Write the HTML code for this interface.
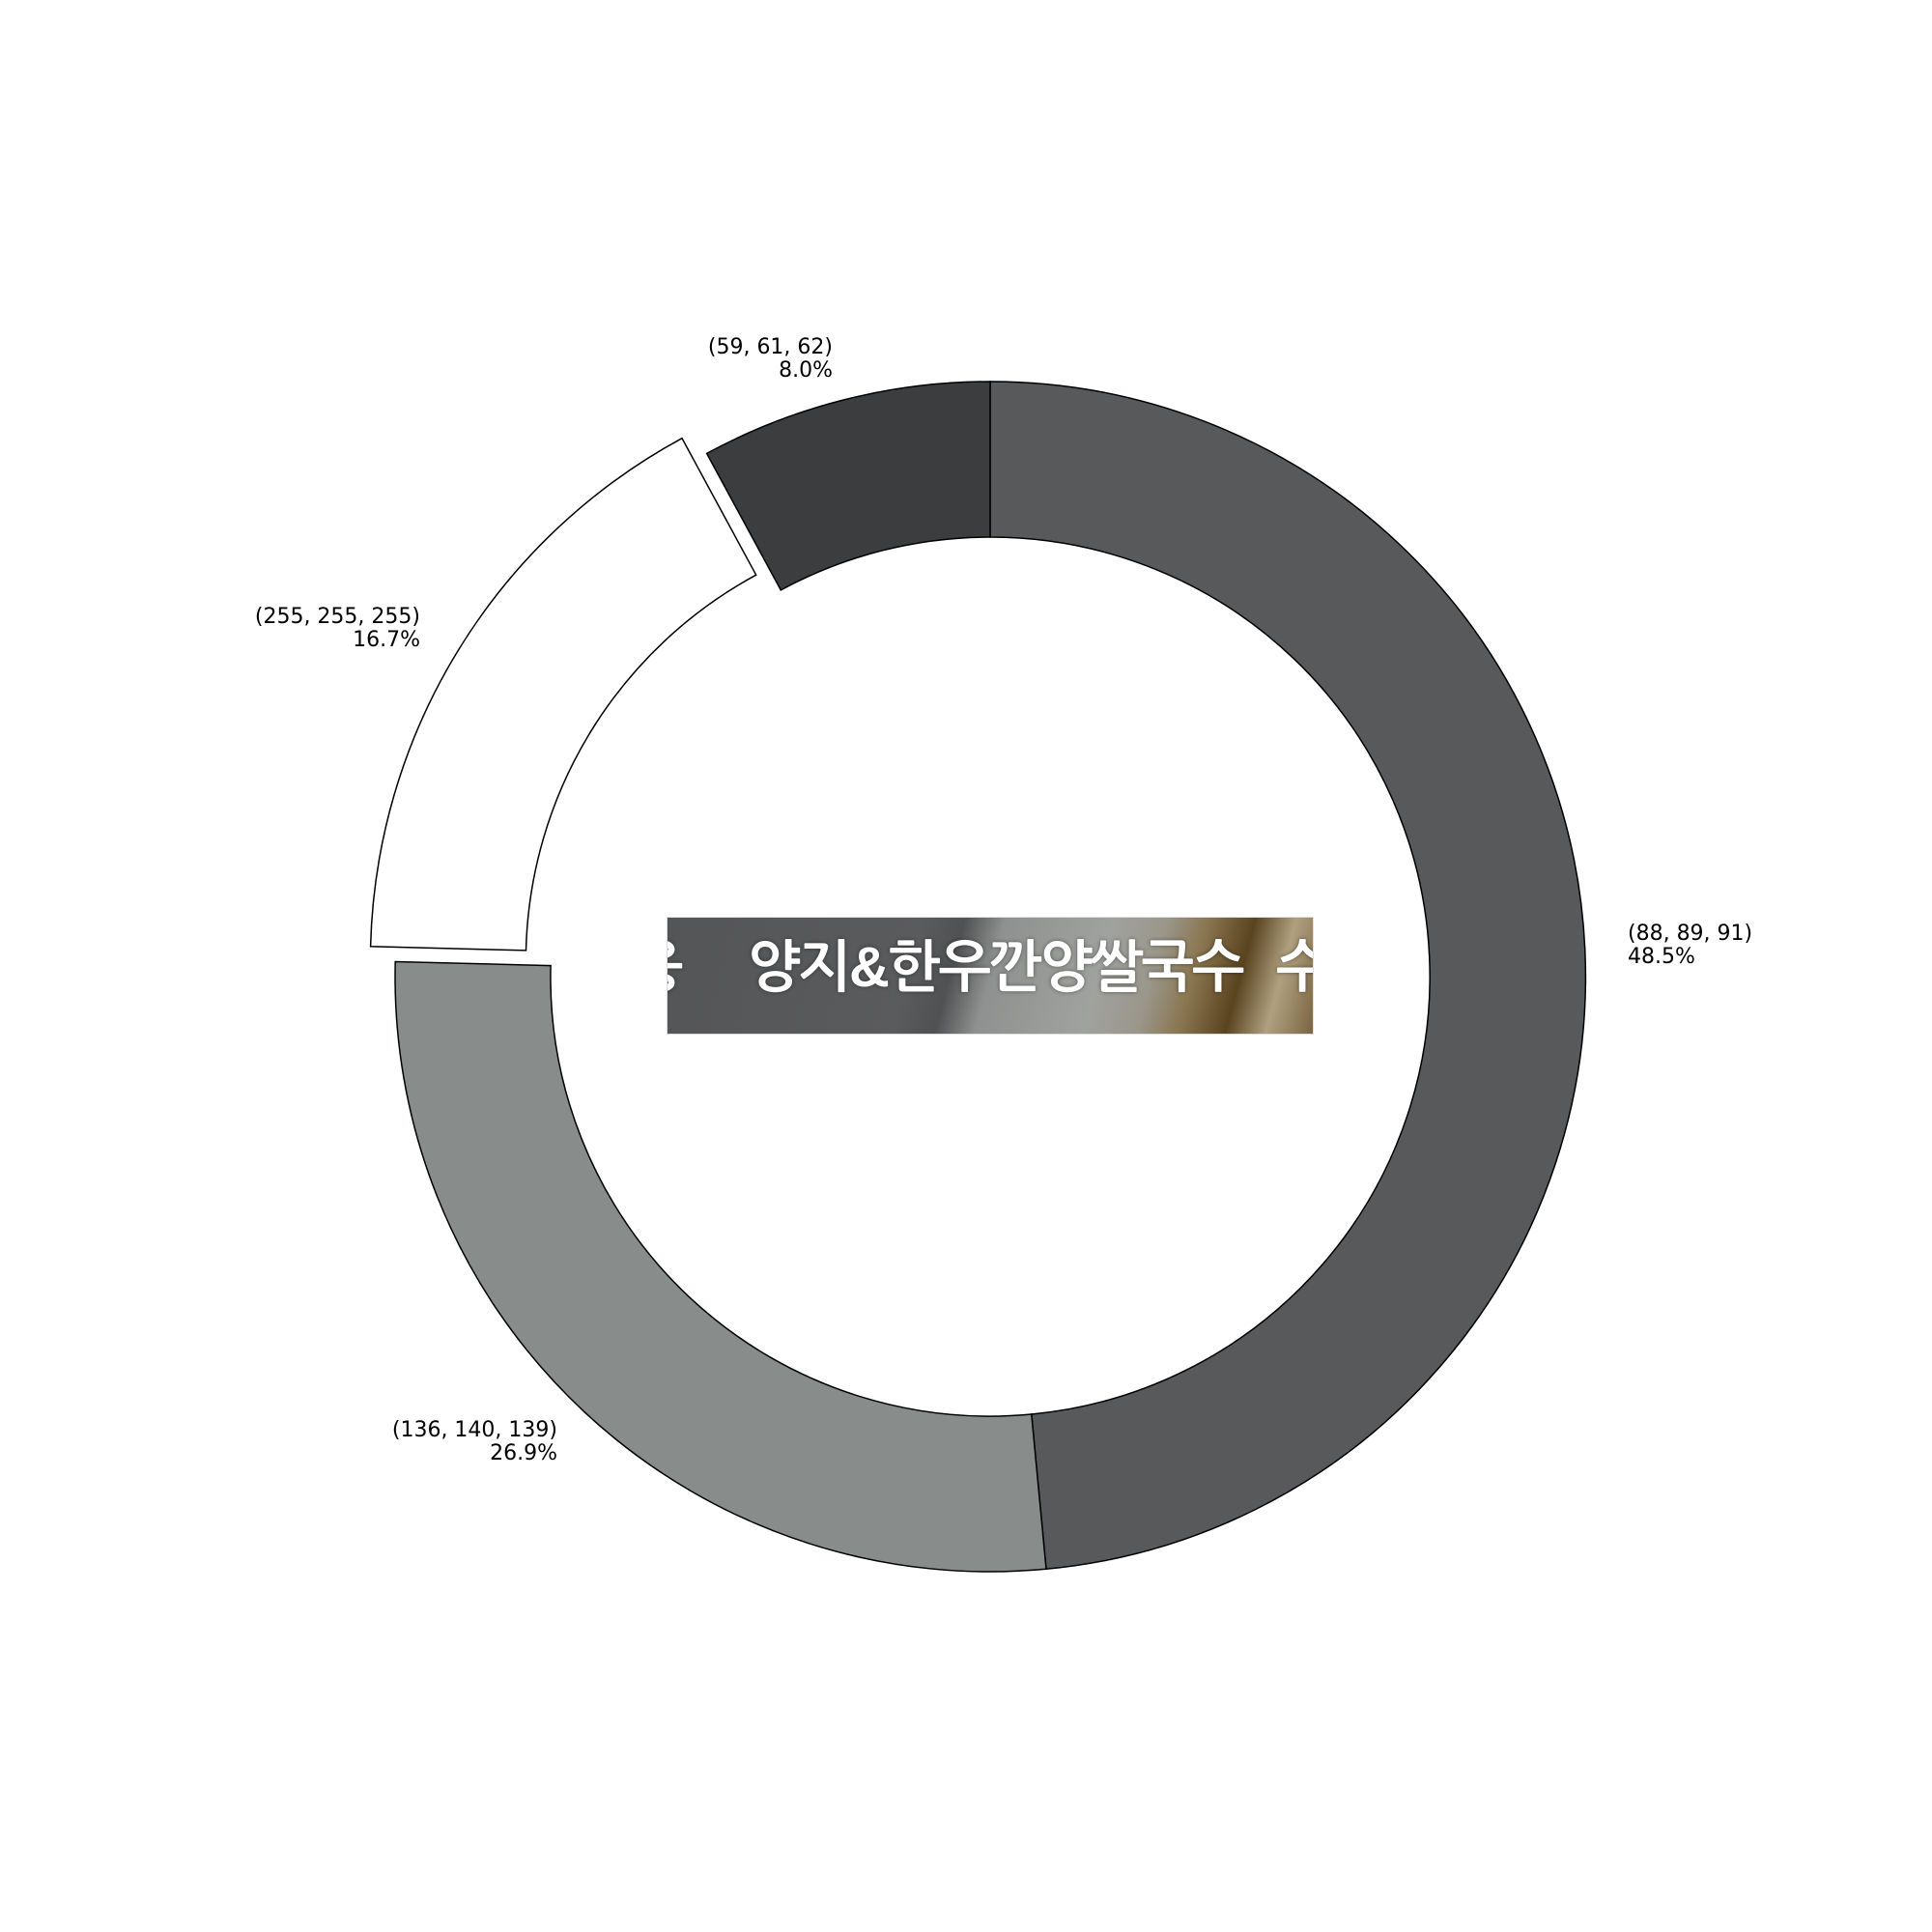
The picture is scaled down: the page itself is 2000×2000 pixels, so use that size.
<!DOCTYPE html>
<html><head><meta charset="utf-8"><style>
html,body{margin:0;padding:0;background:#fff;}
.wrap{position:relative;width:2000px;height:2000px;overflow:hidden;}
.img{position:absolute;left:690px;top:949px;width:670px;height:122px;overflow:hidden;
background:linear-gradient(105deg,#545557 0%,#5a5b5d 38%,#505153 44%,#8e918f 50%,#a0a29f 66%,#9a968a 74%,#8a7650 80%,#5a4420 87%,#b0a080 93%,#7a6440 100%);
border:1px solid #ddd;box-sizing:border-box;}
.img span{position:absolute;top:18px;white-space:nowrap;color:#fff;font-weight:bold;
font-family:"Liberation Sans","NanumGothic","Noto Sans CJK KR",sans-serif;font-size:58px;letter-spacing:-2px;
text-shadow:0 0 4px rgba(0,0,0,.45);}
</style></head><body><div class="wrap">
<svg width="2000" height="2000" style="position:absolute;left:0;top:0" font-family="DejaVu Sans, sans-serif" font-size="22">
<path d="M1025,395 A616,616 0 0 1 1083,1624.3 L1067.8,1464 A455,455 0 0 0 1025,556 Z" fill="#58595b" stroke="#000" stroke-width="1.5"/>
<path d="M1083,1624.3 A616,616 0 0 1 409.2,995.5 L570.1,999.6 A455,455 0 0 0 1067.8,1464 Z" fill="#888c8b" stroke="#000" stroke-width="1.5"/>
<g transform="translate(-25.6,-15.7)"><path d="M409.2,995.5 A616,616 0 0 1 731.6,469.4 L808.3,610.9 A455,455 0 0 0 570.1,999.6 Z" fill="#fff" stroke="#000" stroke-width="1.5"/></g>
<path d="M731.6,469.4 A616,616 0 0 1 1025,395 L1025,556 A455,455 0 0 0 808.3,610.9 Z" fill="#3b3d3e" stroke="#000" stroke-width="1.5"/>
<g text-anchor="end">
<text x="862" y="366">(59, 61, 62)</text><text x="862" y="390">8.0%</text>
<text x="435" y="645">(255, 255, 255)</text><text x="435" y="669">16.7%</text>
<text x="577" y="1487">(136, 140, 139)</text><text x="577" y="1511">26.9%</text>
</g>
<text x="1685" y="973">(88, 89, 91)</text><text x="1685" y="997">48.5%</text>
</svg>
<div class="img"><span style="left:-38px">웅</span><span style="left:83px">양지&amp;한우깐양쌀국수</span><span style="left:630px">수</span></div>
</div></body></html>
